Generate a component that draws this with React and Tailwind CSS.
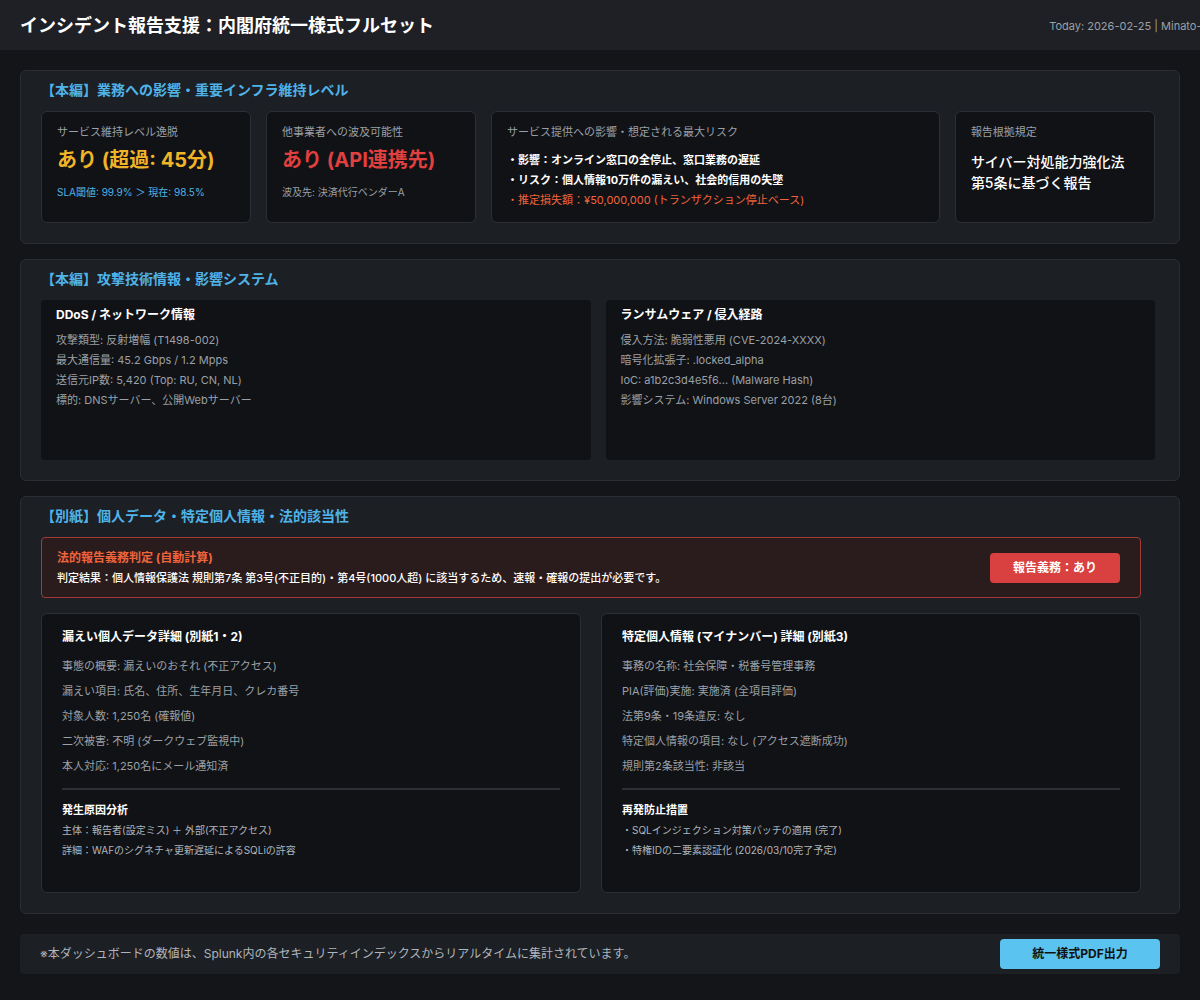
export default function App() {
  const font = { fontFamily: '"Inter","Noto Sans CJK JP",sans-serif' };
  const Panel = ({ title, children, cls = "" }) => (
    <div className={"rounded-md border border-[#2a2d33] bg-[#1c1f24] pl-5 pr-6 pt-[9px] pb-5 " + cls}>
      <div className="text-[14px] font-bold text-[#4fb3e8] leading-[20px] mb-[11px]">{title}</div>
      {children}
    </div>
  );
  const Card = ({ cls = "", children }) => (
    <div className={"rounded-md border border-[#2c2f35] bg-[#111215] " + cls}>{children}</div>
  );
  return (
    <div style={font} className="w-[1200px] h-[1000px] bg-[#141518] overflow-hidden">
      <div className="h-[50px] bg-[#1e2025] flex items-center justify-between pl-5 overflow-hidden">
        <div className="text-[18px] font-bold text-white">インシデント報告支援：内閣府統一様式フルセット</div>
        <div className="text-[11px] text-[#9aa0a8] whitespace-nowrap translate-x-[14px] mt-[2px]">Today: 2026-02-25 | Minato-ku</div>
      </div>
      <div className="px-5 pt-5 flex flex-col gap-[15px]">
        <Panel title="【本編】業務への影響・重要インフラ維持レベル">
          <div className="flex gap-[15px] h-[112px]">
            <Card cls="w-[211px] px-[15px] pt-[12px]">
              <div className="text-[11px] text-[#9aa0a8]">サービス維持レベル逸脱</div>
              <div className="text-[20px] font-bold text-[#f0b429] mt-[4px] leading-[30px]">あり (超過: 45分)</div>
              <div className="text-[10px] text-[#4fb3e8] mt-[10px]">SLA閾値: 99.9% ＞ 現在: 98.5%</div>
            </Card>
            <Card cls="w-[211px] px-[15px] pt-[12px]">
              <div className="text-[11px] text-[#9aa0a8]">他事業者への波及可能性</div>
              <div className="text-[20px] font-bold text-[#e0403f] mt-[4px] leading-[30px]">あり (API連携先)</div>
              <div className="text-[10px] text-[#9aa0a8] mt-[10px]">波及先: 決済代行ベンダーA</div>
            </Card>
            <Card cls="w-[451px] px-[15px] pt-[12px]">
              <div className="text-[11px] text-[#9aa0a8]">サービス提供への影響・想定される最大リスク</div>
              <div className="text-[11px] font-bold text-white mt-[9px] leading-[20px]">・影響：オンライン窓口の全停止、窓口業務の遅延</div>
              <div className="text-[11px] font-bold text-white leading-[20px]">・リスク：個人情報10万件の漏えい、社会的信用の失墜</div>
              <div className="text-[11px] text-[#f0643c] leading-[20px]">・推定損失額：¥50,000,000 (トランザクション停止ベース)</div>
            </Card>
            <Card cls="w-[201px] px-[15px] pt-[12px]">
              <div className="text-[11px] text-[#9aa0a8]">報告根拠規定</div>
              <div className="text-[14px] font-medium text-white mt-[10px] leading-[21px]">サイバー対処能力強化法<br />第5条に基づく報告</div>
            </Card>
          </div>
        </Panel>
        <Panel title="【本編】攻撃技術情報・影響システム">
          <div className="flex gap-[15px] h-[160px]">
            {[
              ["DDoS / ネットワーク情報", ["攻撃類型: 反射増幅 (T1498-002)", "最大通信量: 45.2 Gbps / 1.2 Mpps", "送信元IP数: 5,420 (Top: RU, CN, NL)", "標的: DNSサーバー、公開Webサーバー"]],
              ["ランサムウェア / 侵入経路", ["侵入方法: 脆弱性悪用 (CVE-2024-XXXX)", "暗号化拡張子: .locked_alpha", "IoC: a1b2c3d4e5f6... (Malware Hash)", "影響システム: Windows Server 2022 (8台)"]],
            ].map(([t, ls]) => (
              <div key={t} className="w-[550px] rounded bg-[#111215] px-[15px] pt-[6px]">
                <div className="text-[12px] font-bold text-white mb-[6px]">{t}</div>
                {ls.map((l) => (
                  <div key={l} className="text-[11px] text-[#9aa0a8] leading-[20px]">{l}</div>
                ))}
              </div>
            ))}
          </div>
        </Panel>
        <Panel title="【別紙】個人データ・特定個人情報・法的該当性">
          <div className="w-[1100px]">
            <div className="h-[61px] rounded border border-[#a33a36] bg-[#2a1c1c] flex items-center justify-between pl-[15px] pr-[20px]">
              <div>
                <div className="text-[12px] font-bold text-[#f0643c] leading-[20px]">法的報告義務判定 (自動計算)</div>
                <div className="text-[11px] font-medium text-white leading-[20px]">判定結果：個人情報保護法 規則第7条 第3号(不正目的)・第4号(1000人超) に該当するため、速報・確報の提出が必要です。</div>
              </div>
              <div className="w-[130px] h-[30px] rounded bg-[#d94040] flex items-center justify-center text-[12px] font-bold text-white">報告義務：あり</div>
            </div>
            <div className="flex gap-[20px] mt-[15px]">
              {[
                ["漏えい個人データ詳細 (別紙1・2)", ["事態の概要: 漏えいのおそれ (不正アクセス)", "漏えい項目: 氏名、住所、生年月日、クレカ番号", "対象人数: 1,250名 (確報値)", "二次被害: 不明 (ダークウェブ監視中)", "本人対応: 1,250名にメール通知済"], "発生原因分析", ["主体：報告者(設定ミス) ＋ 外部(不正アクセス)", "詳細：WAFのシグネチャ更新遅延によるSQLiの許容"]],
                ["特定個人情報 (マイナンバー) 詳細 (別紙3)", ["事務の名称: 社会保障・税番号管理事務", "PIA(評価)実施: 実施済 (全項目評価)", "法第9条・19条違反: なし", "特定個人情報の項目: なし (アクセス遮断成功)", "規則第2条該当性: 非該当"], "再発防止措置", ["・SQLインジェクション対策パッチの適用 (完了)", "・特権IDの二要素認証化 (2026/03/10完了予定)"]],
              ].map(([t, ls, t2, ls2]) => (
                <Card key={t} cls="w-[540px] h-[280px] px-[20px] pt-[14px]">
                  <div className="text-[12px] font-bold text-white mb-[8px]">{t}</div>
                  {ls.map((l) => (
                    <div key={l} className="text-[11px] text-[#9aa0a8] leading-[25px]">{l}</div>
                  ))}
                  <div className="border-t-2 border-[#2c2f35] mt-[9px] mb-[12px]" />
                  <div className="text-[11px] font-bold text-white leading-[16px] mb-[2px]">{t2}</div>
                  {ls2.map((l) => (
                    <div key={l} className="text-[10px] text-[#b0b5bc] leading-[20px]">{l}</div>
                  ))}
                </Card>
              ))}
            </div>
          </div>
        </Panel>
        <div className="mt-[5px] h-[40px] rounded bg-[#1c1f24] flex items-center justify-between pl-5 pr-5">
          <div className="text-[12px] text-[#b0b5bc]">※本ダッシュボードの数値は、Splunk内の各セキュリティインデックスからリアルタイムに集計されています。</div>
          <div className="w-[160px] h-[30px] rounded bg-[#5bc3ef] flex items-center justify-center text-[12px] font-bold text-[#111]">統一様式PDF出力</div>
        </div>
      </div>
    </div>
  );
}
